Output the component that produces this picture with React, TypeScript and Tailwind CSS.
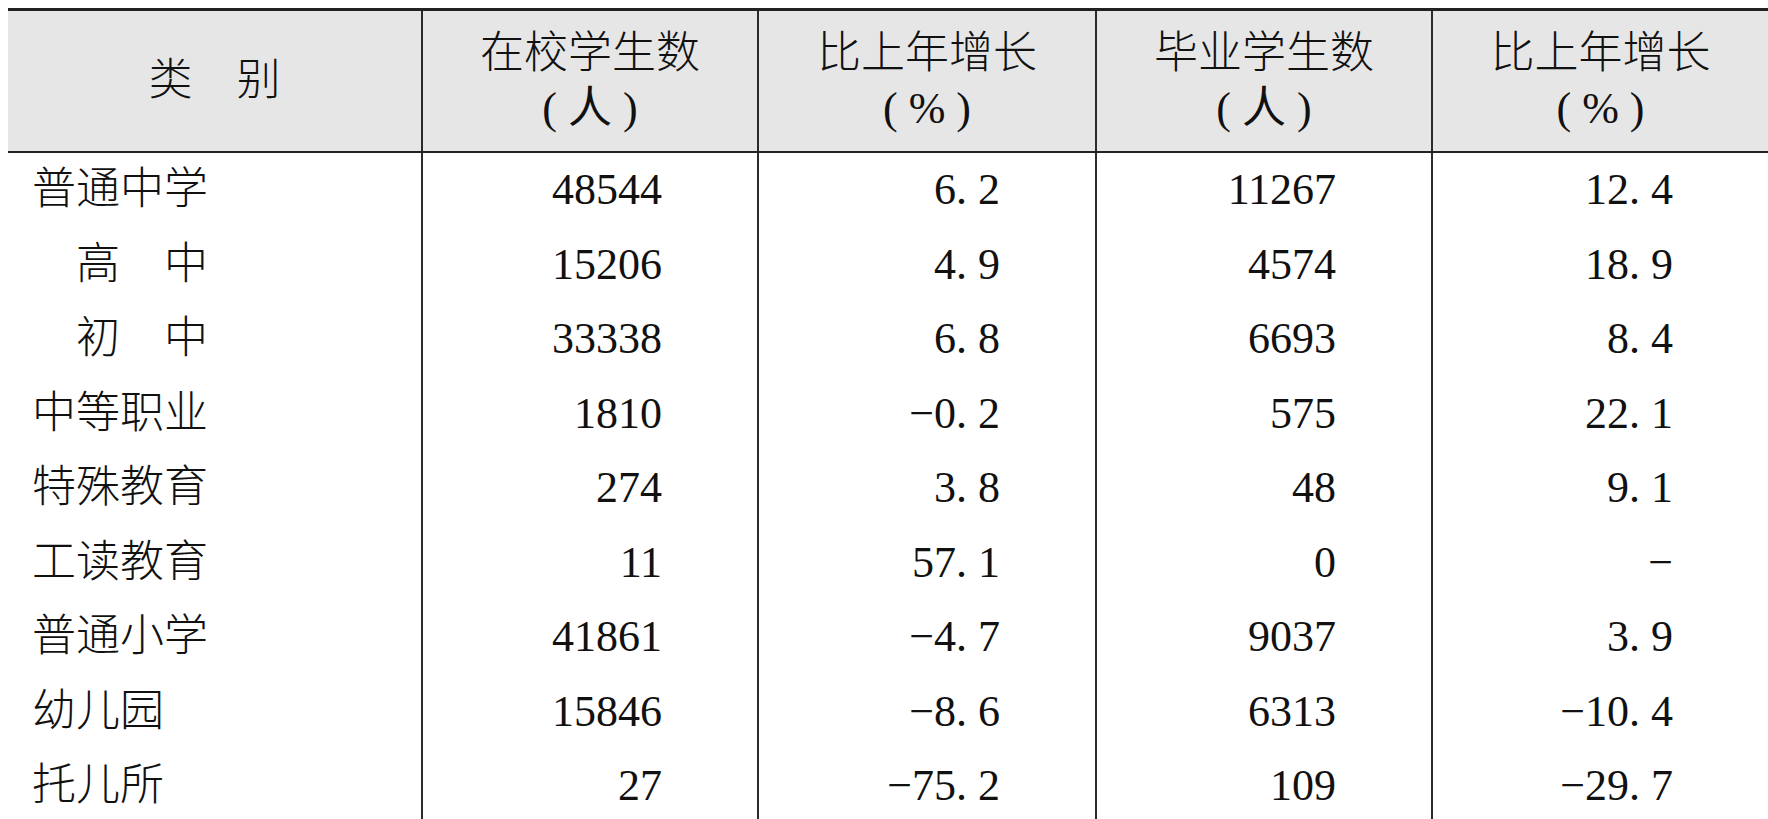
const rows = [
  { name: "普通中学", a: "48544", b: "6. 2", c: "11267", d: "12. 4" },
  { name: "\u3000高\u3000中", a: "15206", b: "4. 9", c: "4574", d: "18. 9" },
  { name: "\u3000初\u3000中", a: "33338", b: "6. 8", c: "6693", d: "8. 4" },
  { name: "中等职业", a: "1810", b: "−0. 2", c: "575", d: "22. 1" },
  { name: "特殊教育", a: "274", b: "3. 8", c: "48", d: "9. 1" },
  { name: "工读教育", a: "11", b: "57. 1", c: "0", d: "−" },
  { name: "普通小学", a: "41861", b: "−4. 7", c: "9037", d: "3. 9" },
  { name: "幼儿园", a: "15846", b: "−8. 6", c: "6313", d: "−10. 4" },
  { name: "托儿所", a: "27", b: "−75. 2", c: "109", d: "−29. 7" },
];

const Head = ({ top, bottom }: { top: string; bottom: string }) => (
  <div className="flex flex-col items-center justify-center border-l-2 border-[#2a2a2a] leading-[55px]">
    <span className="font-light">{top}</span>
    <span className="whitespace-pre">{bottom}</span>
  </div>
);

const Num = ({ v }: { v: string }) => (
  <div className="flex items-center justify-end border-l-2 border-[#2a2a2a] pr-[95px]">
    <span className="font-['Liberation_Serif']">{v}</span>
  </div>
);

export default function App() {
  return (
    <div className="min-h-screen bg-white pt-2 pl-2 text-[#111] text-[44px] overflow-hidden font-['Liberation_Serif','Noto_Sans_CJK_SC',serif]">
      <div className="border-t-[3px] border-[#222]">
        <div className="grid grid-cols-[413px_336px_338px_336px_1fr] h-[142px] bg-[#e6e6e7] border-b-2 border-[#222]">
          <div className="flex items-center justify-center font-light">类{"\u3000"}别</div>
          <Head top="在校学生数" bottom="( 人 )" />
          <Head top="比上年增长" bottom="( % )" />
          <Head top="毕业学生数" bottom="( 人 )" />
          <Head top="比上年增长" bottom="( % )" />
        </div>
        {rows.map((r) => (
          <div key={r.name} className="grid grid-cols-[413px_336px_338px_336px_1fr] h-[74.5px]">
            <div className="flex items-center pl-6 font-light">{r.name}</div>
            <Num v={r.a} />
            <Num v={r.b} />
            <Num v={r.c} />
            <Num v={r.d} />
          </div>
        ))}
      </div>
    </div>
  );
}
